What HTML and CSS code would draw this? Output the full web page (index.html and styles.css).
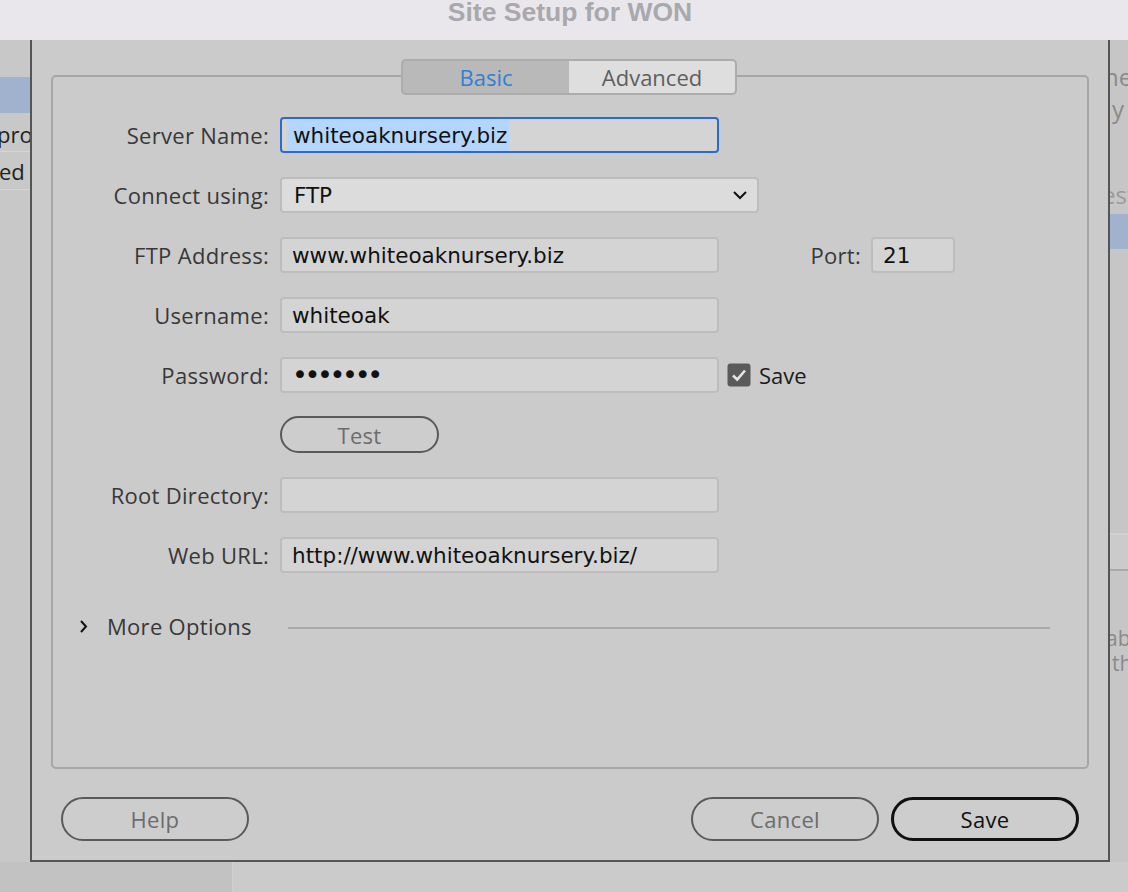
FILE: index.html
```html
<!DOCTYPE html>
<html lang="en">
<head>
    <meta charset="UTF-8">
    <title>Site Setup for WON</title>
    <link rel="stylesheet" href="styles.css">
</head>
<body>
    <div class="titlebar">
        <div class="title">Site Setup for WON</div>
    </div>

    <div class="workspace">
        <div class="side-left">
            <div class="side-row top"></div>
            <div class="side-row selected"></div>
            <div class="side-row"><span class="side-text pro">pro</span></div>
            <div class="side-row"><span class="side-text ed">ed</span></div>
        </div>

        <div class="dialog">
            <div class="panel">
                <div class="tabs">
                    <div class="tab active">Basic</div>
                    <div class="tab">Advanced</div>
                </div>

                <div class="row">
                    <label class="label">Server Name:</label>
                    <div class="field focused"><span class="selection">whiteoaknursery.biz</span></div>
                </div>
                <div class="row">
                    <label class="label">Connect using:</label>
                    <div class="field select">
                        <span>FTP</span>
                        <svg class="chevron-down" width="16" height="10" viewBox="0 0 16 10"><path d="M2 2 L8 8 L14 2" fill="none" stroke="#111" stroke-width="2"/></svg>
                    </div>
                </div>
                <div class="row">
                    <label class="label">FTP Address:</label>
                    <div class="field">www.whiteoaknursery.biz</div>
                    <label class="label port-label">Port:</label>
                    <div class="field port">21</div>
                </div>
                <div class="row">
                    <label class="label">Username:</label>
                    <div class="field">whiteoak</div>
                </div>
                <div class="row row-password">
                    <label class="label">Password:</label>
                    <div class="field dots">•••••••</div>
                    <svg class="checkbox" width="24" height="24" viewBox="0 0 24 24"><rect x="0.5" y="0.5" width="23" height="23" rx="3" fill="#5a5a5a"/><path d="M6 12.5 L10.2 16.5 L18 7.5" fill="none" stroke="#e4e4e4" stroke-width="2.6"/></svg>
                    <span class="check-label">Save</span>
                </div>
                <div class="row row-test">
                    <button class="pill test">Test</button>
                </div>
                <div class="row">
                    <label class="label">Root Directory:</label>
                    <div class="field"></div>
                </div>
                <div class="row">
                    <label class="label">Web URL:</label>
                    <div class="field">http://www.whiteoaknursery.biz/</div>
                </div>

                <div class="more">
                    <svg class="chevron-right" width="9" height="15" viewBox="0 0 9 15"><path d="M2 2 L7 7.5 L2 13" fill="none" stroke="#111" stroke-width="2"/></svg>
                    <span class="more-text">More Options</span>
                    <div class="more-line"></div>
                </div>
            </div>

            <div class="footer">
                <button class="pill">Help</button>
                <div class="footer-right">
                    <button class="pill">Cancel</button>
                    <button class="pill primary">Save</button>
                </div>
            </div>
        </div>

        <div class="side-right">
            <div class="r-text ne">ne</div>
            <div class="r-text y">y</div>
            <div class="r-text est">est</div>
            <div class="r-selected"></div>
            <div class="r-block"></div>
            <div class="r-gap"></div>
            <div class="r-text ab">ab</div>
            <div class="r-text th">th</div>
        </div>
    </div>

    <div class="below">
        <div class="below-left"></div>
    </div>
</body>
</html>
```

FILE: styles.css
```css
body {
    margin: 0;
    width: 1128px;
    height: 892px;
    overflow: hidden;
    background-color: #cbcbcb;
    font-family: "Open Sans", "Liberation Sans", sans-serif;
}
.titlebar {
    height: 40px;
    background-color: #e9e7ec;
    display: flex;
    justify-content: center;
    overflow: hidden;
}
.title {
    font-family: "Liberation Sans", Arial, sans-serif;
    font-weight: bold;
    font-size: 26.5px;
    line-height: 30px;
    margin-top: -3px;
    margin-left: 12px;
    color: #a9a8ad;
}
.workspace {
    display: flex;
    height: 822px;
}

/* window behind, left */
.side-left {
    width: 30px;
    background-color: #c8c8c8;
    overflow: hidden;
}
.side-row {
    height: 38px;
    border-bottom: 1px solid #d6d6d6;
    display: flex;
    align-items: center;
    box-sizing: border-box;
}
.side-row.top {
    height: 37px;
    border-bottom: none;
}
.side-row.selected {
    height: 36px;
    background-color: #a0b2cd;
    border-bottom: none;
}
.side-row:nth-child(3) {
    height: 39px;
    padding-top: 4px;
}
.side-text {
    font-size: 22px;
    color: #222;
    white-space: nowrap;
}
.pro {
    margin-left: -3px;
}
.ed {
    margin-left: -1px;
}

/* dialog */
.dialog {
    width: 1080px;
    box-sizing: border-box;
    border: 2px solid #555;
    border-top: none;
    background-color: #cbcbcb;
    display: flex;
    flex-direction: column;
}
.panel {
    position: relative;
    margin: 35px 19px 0;
    height: 694px;
    box-sizing: border-box;
    border: 2px solid #a6a6a6;
    border-radius: 5px;
    padding-top: 40px;
}
.tabs {
    position: absolute;
    top: -18px;
    left: 348px;
    display: flex;
}
.tab {
    width: 168px;
    height: 36px;
    box-sizing: border-box;
    border: 2px solid #acacac;
    background-color: #dedede;
    color: #5e5e5e;
    font-size: 22px;
    display: flex;
    align-items: center;
    justify-content: center;
}
.tab:first-child {
    border-radius: 5px 0 0 5px;
    border-right: none;
}
.tab:last-child {
    border-radius: 0 5px 5px 0;
    border-left: none;
}
.tab.active {
    background-color: #b9b9b9;
    color: #2f80d3;
}
.row {
    display: flex;
    align-items: center;
    height: 36px;
    margin-bottom: 24px;
}
.label {
    width: 216px;
    text-align: right;
    margin-right: 11px;
    font-size: 22px;
    letter-spacing: 0.3px;
    color: #383838;
    white-space: nowrap;
}
.field {
    width: 439px;
    height: 36px;
    box-sizing: border-box;
    border: 2px solid #bdbdbd;
    border-radius: 4px;
    background-color: #d4d4d4;
    padding-left: 10px;
    display: flex;
    align-items: center;
    font-family: "DejaVu Sans", sans-serif;
    font-size: 21.5px;
    color: #111;
    white-space: nowrap;
}
.field.focused {
    border-color: #2b6bd1;
    padding-left: 5px;
}
.selection {
    background-color: #b5d6fc;
    padding: 3px 2px 3px 6px;
}
.field.select {
    width: 479px;
    background-color: #dcdcdc;
    padding-left: 12px;
    padding-right: 9px;
    justify-content: space-between;
}
.port-label {
    width: 80px;
    margin-left: 62px;
    margin-right: 10px;
}
.field.port {
    width: 84px;
    padding-left: 10px;
}
.dots {
    font-size: 27px;
    letter-spacing: -3.4px;
    padding-bottom: 2px;
}
.row-password {
    margin-bottom: 23px;
}
.checkbox {
    margin-left: 8px;
}
.check-label {
    margin-left: 8px;
    font-size: 22px;
    color: #1c1c1c;
}
.row-test {
    height: 37px;
    padding-left: 227px;
}
.pill {
    width: 188px;
    height: 44px;
    box-sizing: border-box;
    border: 2px solid #5a5a5a;
    border-radius: 22px;
    background-color: #cdcdcd;
    font-family: "Open Sans", "Liberation Sans", sans-serif;
    font-size: 22px;
    letter-spacing: 0.3px;
    color: #6c6c6c;
    padding: 0;
}
.pill.test {
    width: 159px;
    height: 37px;
    border-radius: 19px;
}
.pill.primary {
    border: 3px solid #111;
    color: #111;
}
.more {
    display: flex;
    align-items: center;
    height: 36px;
    margin-top: 35px;
    padding-left: 26px;
    padding-right: 37px;
}
.more-text {
    margin-left: 19px;
    font-size: 22px;
    letter-spacing: 0.3px;
    color: #383838;
}
.more-line {
    flex: 1;
    height: 2px;
    margin-left: 36px;
    margin-top: 3px;
    background-color: #a9a9a9;
}
.footer {
    display: flex;
    justify-content: space-between;
    padding: 28px 29px 0;
}
.footer-right {
    display: flex;
    gap: 12px;
}

/* window behind, right */
.side-right {
    width: 18px;
    background-color: #c6c6c6;
    overflow: hidden;
    color: #8a8a8a;
    font-size: 24px;
}
.r-text {
    margin-left: -6px;
    white-space: nowrap;
    line-height: 30px;
}
.ne {
    margin-top: 22px;
}
.y {
    margin-top: 2px;
    margin-left: 2px;
}
.est {
    margin-top: 56px;
    margin-left: -8px;
    color: #9a9a9a;
}
.r-selected {
    margin-top: 4px;
    height: 35px;
    background-color: #a0b2cd;
}
.r-block {
    height: 284px;
    border-bottom: 2px solid #d2d2d2;
}
.r-gap {
    height: 34px;
    background-color: #cbcbcb;
    border-bottom: 2px solid #aaaaaa;
}
.ab {
    margin-top: 55px;
    margin-left: -4px;
    font-size: 21px;
    line-height: 25px;
}
.th {
    margin-left: 2px;
    font-size: 21px;
    line-height: 25px;
}

.below {
    height: 30px;
    display: flex;
}
.below-left {
    width: 232px;
    background-color: #c2c2c2;
    border-right: 1px solid #d2d2d2;
}
```
